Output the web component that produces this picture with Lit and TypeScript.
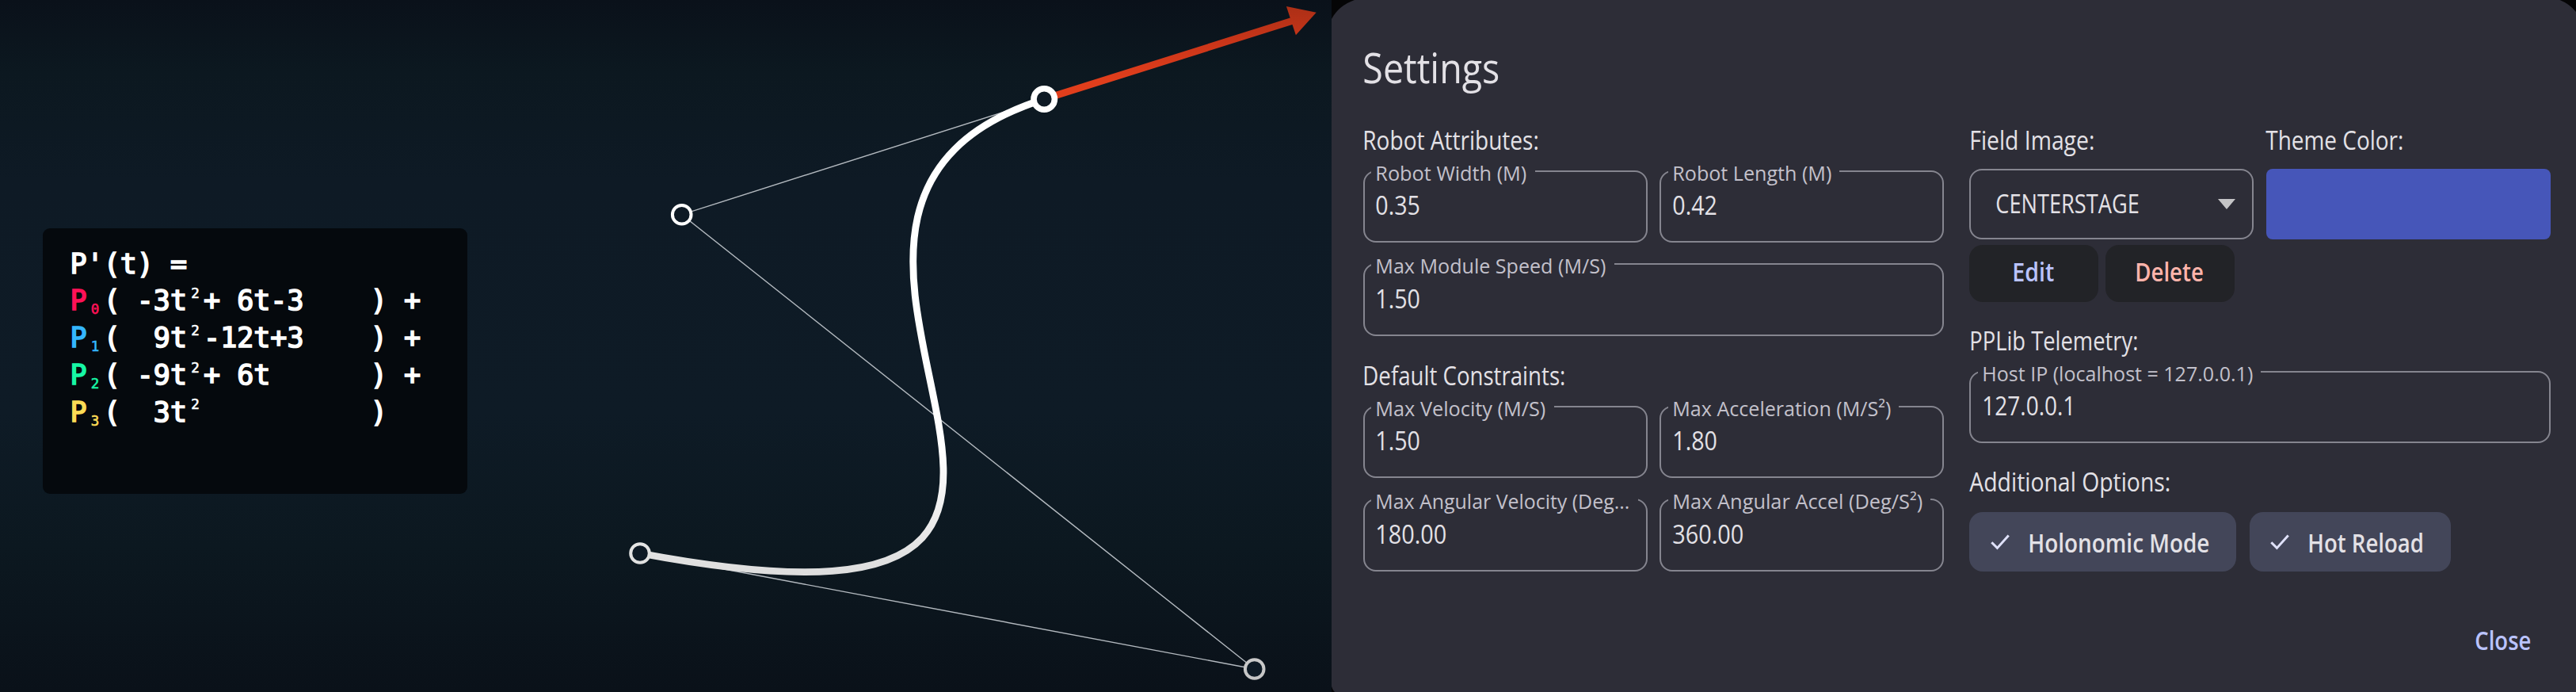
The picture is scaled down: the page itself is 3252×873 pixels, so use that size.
import { LitElement, html, svg, css, nothing } from "lit";
import { customElement, property } from "lit/decorators.js";

/** A single line of text set to an exact measure. */
@customElement("fit-text")
class FitText extends LitElement {
  @property() text = "";
  @property({ type: Number }) w = 100;
  @property({ type: Number }) size = 32;
  @property({ type: Number }) h = 40;
  @property({ type: Number }) base = 30;

  static styles = css`
    :host { display: block; flex: none; }
    svg { display: block; overflow: visible; }
    text { fill: currentColor; font-family: "Open Sans", "Noto Sans", sans-serif; }
  `;

  render() {
    return html`<svg width=${this.w} height=${this.h}>
      <text x="-1.7" y=${this.base} font-size=${this.size} textLength=${this.w} lengthAdjust="spacingAndGlyphs">${this.text}</text>
    </svg>`;
  }
}

@customElement("outlined-field")
class OutlinedField extends LitElement {
  @property() label = "";
  @property() value = "";
  @property({ type: Number }) lw = 100;
  @property({ type: Number }) vw = 56;

  static styles = css`
    :host { display: block; min-width: 0; }
    fieldset {
      box-sizing: border-box; height: 103.5px; margin: 0; padding: 0 0 0 15.5px; min-width: 0;
      border: 2.4px solid #85858f; border-left-width: 2px; border-right-width: 2px; border-radius: 16px;
    }
    legend { padding: 0 8.5px 0 7px; margin-left: -7px; color: #c3c1cb; }
    .value { margin-top: 12.4px; color: #e3e1e6; }
  `;

  render() {
    return html`<fieldset>
      <legend><fit-text .text=${this.label} .w=${this.lw} .size=${26} .h=${26} .base=${24.5}></fit-text></legend>
      <fit-text class="value" .text=${this.value} .w=${this.vw}></fit-text>
    </fieldset>`;
  }
}

@customElement("curve-stage")
class CurveStage extends LitElement {
  static styles = css`
    :host {
      display: flex; align-items: flex-start; position: relative; width: 1681px; height: 873px; box-sizing: border-box;
      padding: 287.5px 0 0 54px;
      background: linear-gradient(#0a111a 0, #0c1820 90px, #0e1a25 230px, #0e1b26 520px, #0c1820 690px, #0a1119 873px);
    }
    .canvas { position: absolute; inset: 0; }
    .card {
      position: relative; box-sizing: border-box; width: 536px; height: 335px; border-radius: 9px;
      background: #05090d; padding: 22px 0 0 34.5px;
      font: 400 35px/46.8px "DejaVu Sans Mono", monospace; color: #fff; -webkit-text-stroke: 1.7px currentColor;
    }
    .row { white-space: pre; height: 46.8px; }
    .sub, .sup {
      display: inline-block; width: 21.07px; text-align: center; font-size: 17.5px; line-height: 1;
      position: relative; -webkit-text-stroke-width: 0.6px;
    }
    .sub { top: 5px; }
    .sup { top: -15.3px; }
    .c0 { color: #ff1157; } .c1 { color: #34b6ff; } .c2 { color: #17f7a5; } .c3 { color: #fbdb55; }
  `;

  private rows: [string, string][] = [
    ["( -3t", "+ 6t-3    ) +"],
    ["(  9t", "-12t+3    ) +"],
    ["( -9t", "+ 6t      ) +"],
    ["(  3t", "          )"],
  ];

  render() {
    return html`
      <svg class="canvas" width="1681" height="873">
        <defs>
          <linearGradient id="ink" gradientUnits="userSpaceOnUse" x1="0" y1="0" x2="0" y2="873">
            <stop offset=".65" stop-color="#fff" /><stop offset=".8" stop-color="#e2e2e2" /><stop offset="1" stop-color="#c2c2c2" />
          </linearGradient>
          <linearGradient id="hot" gradientUnits="userSpaceOnUse" x1="0" y1="5" x2="0" y2="100">
            <stop offset="0" stop-color="#aa2f16" /><stop offset=".5" stop-color="#c93519" /><stop offset="1" stop-color="#e03e1c" />
          </linearGradient>
        </defs>
        <path d="M808 698 1583.7 844 860.7 270.7 1318.2 125" fill="none" stroke="#b3b9bf" stroke-width="1.4" />
        <path d="M808 698C1583.7 844 860.7 270.7 1318.2 125" fill="none" stroke="url(#ink)" stroke-width="8.8" />
        <path d="M1318.2 125 1634 25.5" stroke="url(#hot)" stroke-width="8.8" />
        <path d="M1661.7 15.7 1623.9 8 1635.9 44.3Z" fill="url(#hot)" />
        <g fill="#0e1a25" stroke="url(#ink)" stroke-width="4">
          <circle cx="808" cy="698" r="11.8" /><circle cx="1583.7" cy="844" r="11.8" /><circle cx="860.7" cy="270.7" r="11.8" />
          <circle cx="1318.2" cy="125" r="13.2" stroke-width="7.6" />
        </g>
      </svg>
      <div class="card">
        <div class="row">P'(t) =</div>
        ${this.rows.map(([a, b], i) => html`<div class="row"><span class="c${i}">P<span class="sub">${i}</span></span>${a}<span class="sup">2</span>${b}</div>`)}
      </div>`;
  }
}

@customElement("settings-dialog")
class SettingsDialog extends LitElement {
  static styles = css`
    :host { display: block; width: 1571px; height: 873px; background: #050506; }
    .panel {
      box-sizing: border-box; height: 873px; padding: 55.3px 32.5px 0 39.5px; background: #2d2d37; color: #e3e1e6;
      clip-path: path("M0 24Q9 7 29 0H1550.6Q1563 5 1571 15V873H4Q1 870 0 866Z");
    }
    .title { margin-left: 1.5px; }
    .cols { display: grid; grid-template-columns: 733.5px 733.5px; gap: 32px; margin-top: 39.7px; height: 607px; }
    .head { margin-left: 1.5px; margin-bottom: 4px; }
    .pair { display: grid; grid-template-columns: 359px 359px; column-gap: 15.5px; }
    .fields { display: grid; row-gap: 14px; }
    .fields + .head { margin-top: 32px; }
    .pick { margin-top: 14.5px; box-sizing: border-box; height: 89px; }
    .select {
      display: flex; align-items: center; justify-content: space-between; padding: 0 21px 0 33px;
      border: 2.4px solid #85858f; border-left-width: 2px; border-right-width: 2px; border-radius: 16px;
    }
    .swatch { background: #4656b9; border-radius: 8px; }
    .actions { display: flex; gap: 9.7px; margin: 7px 0 31px; }
    .btn {
      display: flex; justify-content: center; box-sizing: border-box; width: 162.5px; height: 71.5px; padding-top: 15.4px;
      border-radius: 17px; background: #222327; font-weight: 600;
    }
    .btn fit-text { margin-left: 2px; }
    .edit, .close { color: #bac3ff; }
    .delete { color: #ffb4ab; }
    .host { margin-bottom: 31px; }
    .chips { display: flex; gap: 17px; margin-top: 15.7px; }
    .chip {
      display: flex; align-items: flex-start; box-sizing: border-box; height: 74.6px; padding: 21px 32.2px 0 26.5px; gap: 25px;
      border-radius: 17px; background: #434659; font-weight: 600;
    }
    .check { display: block; margin-top: 6.6px; }
    .foot { display: flex; justify-content: flex-end; margin-top: 24px; padding-right: 22.5px; font-weight: 600; }
  `;

  private head(text: string, w: number) {
    return html`<fit-text class="head" .text=${text} .w=${w}></fit-text>`;
  }

  private field(label: string, lw: number, value: string, vw: number, cls = "") {
    return html`<outlined-field class=${cls || nothing} .label=${label} .lw=${lw} .value=${value} .vw=${vw}></outlined-field>`;
  }

  private chip(text: string, w: number) {
    return html`<div class="chip">
      <svg class="check" width="24" height="20" viewBox="0 0 24 20"><path d="M1.3 10.2 8.4 17.4 22.7 1.6" fill="none" stroke="#dfe1f9" stroke-width="3" /></svg>
      <fit-text .text=${text} .w=${w}></fit-text>
    </div>`;
  }

  render() {
    return html`<div class="panel">
      <fit-text class="title" .text=${"Settings"} .w=${173} .size=${53} .h=${64} .base=${50}></fit-text>
      <div class="cols">
        <section>
          ${this.head("Robot Attributes:", 222.5)}
          <div class="fields">
            <div class="pair">${this.field("Robot Width (M)", 191, "0.35", 56.5)}${this.field("Robot Length (M)", 201, "0.42", 56.5)}</div>
            ${this.field("Max Module Speed (M/S)", 291, "1.50", 56.5)}
          </div>
          ${this.head("Default Constraints:", 256)}
          <div class="fields">
            <div class="pair">${this.field("Max Velocity (M/S)", 215, "1.50", 56.5)}${this.field("Max Acceleration (M/S²)", 276, "1.80", 56.5)}</div>
            <div class="pair">${this.field("Max Angular Velocity (Deg...", 321, "180.00", 90)}${this.field("Max Angular Accel (Deg/S²)", 316, "360.00", 90)}</div>
          </div>
        </section>
        <section>
          <div class="pair">
            <div>${this.head("Field Image:", 158)}
              <div class="pick select">
                <fit-text .text=${"CENTERSTAGE"} .w=${181.5} .base=${31}></fit-text>
                <svg width="22" height="13"><path d="M0 0H22L11 13Z" fill="#c4c4c6" /></svg>
              </div>
            </div>
            <div>${this.head("Theme Color:", 174)}<div class="pick swatch"></div></div>
          </div>
          <div class="actions">
            <div class="btn edit"><fit-text .text=${"Edit"} .w=${53}></fit-text></div>
            <div class="btn delete"><fit-text .text=${"Delete"} .w=${86.5}></fit-text></div>
          </div>
          ${this.head("PPLib Telemetry:", 213)}
          ${this.field("Host IP (localhost = 127.0.0.1)", 342, "127.0.0.1", 118, "host")}
          ${this.head("Additional Options:", 254)}
          <div class="chips">${this.chip("Holonomic Mode", 229)}${this.chip("Hot Reload", 146.5)}</div>
        </section>
      </div>
      <div class="foot"><fit-text class="close" .text=${"Close"} .w=${71}></fit-text></div>
    </div>`;
  }
}

@customElement("app-root")
class AppRoot extends LitElement {
  static styles = css`:host { display: flex; width: 3252px; height: 873px; overflow: hidden; background: #050506; }`;
  render() {
    return html`<curve-stage></curve-stage><settings-dialog></settings-dialog>`;
  }
}
